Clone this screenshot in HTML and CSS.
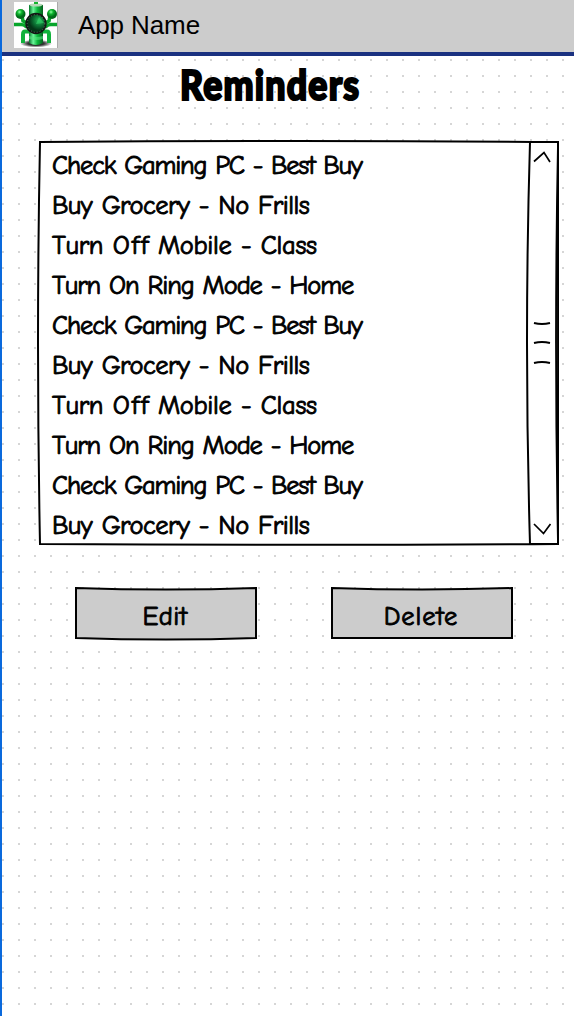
FILE: index.html
```html
<!DOCTYPE html>
<html lang="en">
<head>
<meta charset="utf-8">
<title>Reminders</title>
<link rel="stylesheet" href="styles.css">
</head>
<body>
<div class="screen">
  <header class="app-bar">
    <svg class="logo" width="44" height="46" viewBox="0 0 44 46">
      <defs>
        <linearGradient id="tube" x1="0" x2="1"><stop offset="0" stop-color="#04772a"/><stop offset=".3" stop-color="#6cf59a"/><stop offset=".6" stop-color="#0cb83c"/><stop offset="1" stop-color="#03601d"/></linearGradient>
        <radialGradient id="ball" cx=".4" cy=".3"><stop offset="0" stop-color="#8dffa0"/><stop offset=".45" stop-color="#0cb52c"/><stop offset="1" stop-color="#006a18"/></radialGradient>
        <radialGradient id="lens" cx=".65" cy=".35"><stop offset="0" stop-color="#25b857"/><stop offset=".6" stop-color="#0a6a30"/><stop offset="1" stop-color="#033517"/></radialGradient>
        <radialGradient id="shade"><stop offset="0" stop-color="#222"/><stop offset=".5" stop-color="#333"/><stop offset="1" stop-color="#222" stop-opacity="0"/></radialGradient>
      </defs>
      <path fill="#fff" d="M0 0h43v46H0z"/><path fill="#aaa" d="M43 0h1v46h-1z"/>
      <ellipse cx="22" cy="41.500" rx="16" ry="4" fill="url(#shade)"/>
      <path d="M0 22.500h7q3 0 5 2h4M43 22.500h-6q-3 0-5 2h-4M8 14l1 5 7 3M36 14l-1 5-7 3" fill="none" stroke="#07a52b" stroke-width="3.500"/>
      <path d="M15 29.500H11q-2 0-2 3V41M29 29.500h4q2 0 2 3V41" fill="none" stroke="#10b23b" stroke-width="4"/>
      <path d="M15 3q7-2 14 0v38q-7 4-14 0z" fill="url(#tube)"/>
      <ellipse cx="22" cy="3" rx="6.500" ry="1.600" fill="#b6d8b8"/><path d="M20 0h4v2h-4z" fill="#16b52f"/>
      <path d="M15 34q7 2 14 0v3q-7 2-14 0z" fill="#56e47e" opacity=".6"/>
      <circle cx="6.500" cy="12" r="5" fill="url(#ball)"/><circle cx="38" cy="12" r="5" fill="url(#ball)"/>
      <circle cx="22" cy="21.500" r="9.700" fill="url(#lens)" stroke="#101612" stroke-width="2"/>
      <circle cx="22" cy="21.500" r="8.800" fill="none" stroke="#8b958e" stroke-width=".6" stroke-dasharray="1 2"/>
      <path d="M22 22l3-7 5 6z" fill="#35d36a" opacity=".6"/>
    </svg>
    <span class="app-name">App Name</span>
  </header>
  <main class="content">
    <h1 class="title"><span class="title-text">Reminders</span></h1>
    <section class="list-box">
      <svg class="sketch" width="524" height="410" viewBox="0 0 524 410">
        <path d="M4 6Q260 4 522 6Q522 210 522 408Q260 411 4 408Q0 206 4 6z" fill="#fff"/>
        <path d="M4 6Q260 4 522 6L522 408Q260 409.500 4 408Q0 206 4 6z" fill="none" stroke="#000" stroke-width="2"/>
        <path d="M494 6Q488 206 494 408" fill="none" stroke="#000" stroke-width="2"/>
        <path d="M522 6Q518 206 522 408z" fill="#76766f" stroke="#000" stroke-width="1.800"/>
        <path d="M494 408h28M494 6h28" stroke="#000" stroke-width="2"/>
        <path d="M498 25.500l10-9 6 9.500M498 388l9.500 9.500 7-9.500" fill="none" stroke="#000" stroke-width="1.700"/>
        <path d="M498 187q8 2 16 0M498 207q8-2 16 0M498 227q8-2 16 0" fill="none" stroke="#000" stroke-width="2"/>
      </svg>
      <ul class="list">
        <li class="item check">Check Gaming PC - Best Buy</li>
        <li class="item buy">Buy Grocery - No Frills</li>
        <li class="item off">Turn <span class="wide">Off</span> Mobile - Class</li>
        <li class="item ring">Turn On Ring Mode - Home</li>
        <li class="item check">Check Gaming PC - Best Buy</li>
        <li class="item buy">Buy Grocery - No Frills</li>
        <li class="item off">Turn <span class="wide">Off</span> Mobile - Class</li>
        <li class="item ring">Turn On Ring Mode - Home</li>
        <li class="item check">Check Gaming PC - Best Buy</li>
        <li class="item buy">Buy Grocery - No Frills</li>
      </ul>
    </section>
    <div class="actions">
      <button class="button edit">
        <svg class="sketch" width="184" height="58" viewBox="0 0 184 58"><path d="M2 3Q92 6 182 3V53Q92 56 2 53z" fill="#ccc" stroke="#000" stroke-width="2"/></svg>
        <span class="label">Edit</span>
      </button>
      <button class="button delete">
        <svg class="sketch" width="184" height="58" viewBox="0 0 184 58"><path d="M2 3Q92 6 182 3V53H2z" fill="#ccc" stroke="#000" stroke-width="2"/></svg>
        <span class="label">Delete</span>
      </button>
    </div>
  </main>
</div>
</body>
</html>
```
FILE: styles.css
```css
* { box-sizing: border-box; }
body { margin: 0; background: #fff; color: #000; }
.screen { width: 574px; height: 1016px; overflow: hidden; border-left: 2px solid #0a69dc; }
.app-bar { display: flex; align-items: flex-start; height: 56px; padding: 2px 0 0 12px; background: #ccc; border-bottom: 4px solid #1a3180; }
.logo { display: block; flex: none; }
.app-name { margin-left: 20px; font: 26px/46px "Liberation Sans", Arial, sans-serif; letter-spacing: -.1px; }
.content {
  height: 960px;
  background-image: conic-gradient(from 270deg at 2px 2px, #d6d6d6 90deg, transparent 0);
  background-size: 16px 16px;
  background-position: 0 3px;
}
.title { display: flex; height: 80px; margin: 0; padding: 4px 0 0 178px; font: 900 41px/50px Lato, sans-serif; }
.title-text { display: block; letter-spacing: 1.4px; -webkit-text-stroke: 2.2px #000; transform: scaleX(.87); transform-origin: 0 0; }
.list-box { position: relative; width: 524px; height: 410px; margin-left: 34px; }
.sketch { position: absolute; top: 0; left: 0; }
.list { position: relative; margin: 0; padding: 10px 0 0 16px; list-style: none; }
.item, .button { font: 500 26.5px/40px "Comic Sans MS", "Comic Neue", Lato, sans-serif; -webkit-text-stroke: .9px #000; font-variant-ligatures: none; }
.item { width: max-content; height: 40px; white-space: nowrap; }
.check { letter-spacing: -1.2px; word-spacing: 1.2px; }
.buy { letter-spacing: -.56px; word-spacing: 1.2px; }
.off { letter-spacing: -.35px; word-spacing: 1px; }
.wide { letter-spacing: 2px; margin-right: -2px; }
.ring { letter-spacing: -1.1px; word-spacing: 1.2px; }
.actions { display: flex; gap: 72px; padding: 39px 0 0 72px; }
.button { position: relative; width: 184px; height: 58px; padding: 0; border: 0; background: none; color: #000; }
.label { position: relative; display: block; padding: 4px 2px 0 0; line-height: 56px; }
.edit { letter-spacing: .3px; }
.delete { letter-spacing: .9px; }
```
